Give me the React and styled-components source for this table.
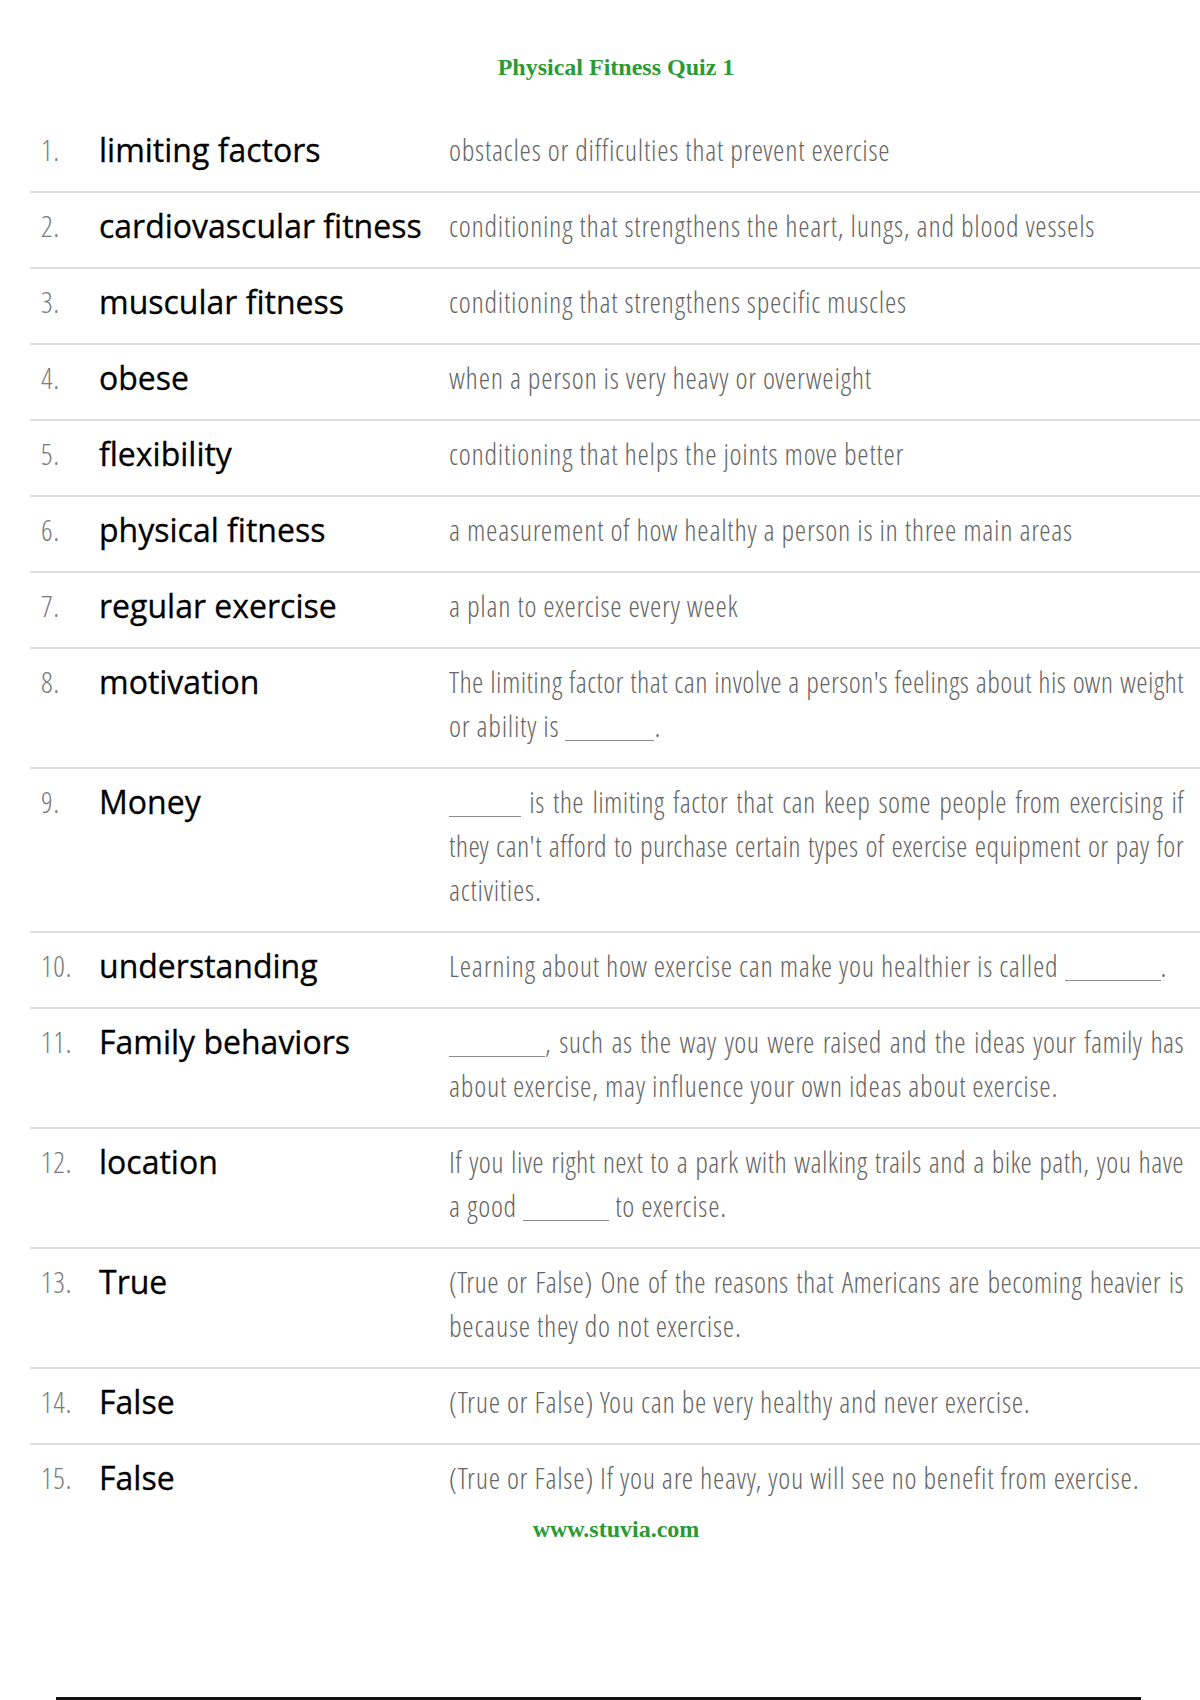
import React from "react";
import styled, { createGlobalStyle } from "styled-components";

const GlobalStyle = createGlobalStyle`
  html, body {
    margin: 0;
    padding: 0;
    background: #ffffff;
  }
`;

const Page = styled.div`
  width: 1200px;
  height: 1700px;
  overflow: hidden;
  display: flex;
  flex-direction: column;
`;

const Watermark = styled.div`
  font-family: "Liberation Serif", "Times New Roman", serif;
  font-weight: bold;
  font-size: 24px;
  line-height: 28px;
  color: #2a9a35;
  text-align: center;
  padding-left: 32px;
`;

const Title = styled(Watermark)`
  margin-top: 53px;
`;

const Footer = styled(Watermark)`
  margin-top: 15px;
`;

const Table = styled.div`
  margin: 36px 0 0 30px;
  width: 1170px;
`;

const Row = styled.div`
  display: grid;
  grid-template-columns: 58px 350px 1fr;
  padding: 11px 16px 19px 11px;
  border-bottom: 2px solid #dddddd;

  &:last-child {
    border-bottom: none;
    padding-bottom: 0;
  }
`;

const condensed = `
  font-family: "Open Sans Condensed Light", "Open Sans Condensed", "Open Sans", sans-serif;
  font-weight: 300;
  font-stretch: 75%;
  line-height: 44px;
  letter-spacing: 0.7px;
`;

const Num = styled.div`
  ${condensed}
  font-size: 29px;
  color: #7a7a7a;
`;

const Term = styled.div`
  font-family: "Open Sans", sans-serif;
  font-size: 32px;
  font-weight: 500;
  line-height: 44px;
  color: #000000;
  -webkit-text-stroke: 0.3px #000000;
  white-space: nowrap;
`;

const Def = styled.div`
  ${condensed}
  font-size: 29px;
  color: #666666;
`;

// wrapped lines are squeezed a little, then justified to the column edge
const Line = styled.div`
  white-space: nowrap;
  letter-spacing: ${(p) => (p.$fill ? "0.35px" : "0.7px")};
  text-align: ${(p) => (p.$fill ? "justify" : "left")};
  text-align-last: ${(p) => (p.$fill ? "justify" : "left")};
`;

const Blank = styled.span`
  display: inline-block;
  width: ${(p) => p.$w}px;
  height: 0;
  border-bottom: 1.5px solid #8a8a8a;
  margin-bottom: -4px;
`;

const Rule = styled.div`
  margin: auto 0 0 56px;
  width: 1085px;
  height: 3px;
  background: #111111;
`;

const items = [
  { term: "limiting factors", def: [["obstacles or difficulties that prevent exercise"]] },
  { term: "cardiovascular fitness", def: [["conditioning that strengthens the heart, lungs, and blood vessels"]] },
  { term: "muscular fitness", def: [["conditioning that strengthens specific muscles"]] },
  { term: "obese", def: [["when a person is very heavy or overweight"]] },
  { term: "flexibility", def: [["conditioning that helps the joints move better"]] },
  { term: "physical fitness", def: [["a measurement of how healthy a person is in three main areas"]] },
  { term: "regular exercise", def: [["a plan to exercise every week"]] },
  {
    term: "motivation",
    def: [
      ["The limiting factor that can involve a person's feelings about his own weight"],
      ["or ability is ", { blank: 89 }, "."],
    ],
  },
  {
    term: "Money",
    def: [
      [{ blank: 72 }, " is the limiting factor that can keep some people from exercising if"],
      ["they can't afford to purchase certain types of exercise equipment or pay for"],
      ["activities."],
    ],
  },
  { term: "understanding", def: [["Learning about how exercise can make you healthier is called ", { blank: 96 }, "."]] },
  {
    term: "Family behaviors",
    def: [
      [{ blank: 96 }, ", such as the way you were raised and the ideas your family has"],
      ["about exercise, may influence your own ideas about exercise."],
    ],
  },
  {
    term: "location",
    def: [
      ["If you live right next to a park with walking trails and a bike path, you have"],
      ["a good ", { blank: 86 }, " to exercise."],
    ],
  },
  {
    term: "True",
    def: [
      ["(True or False) One of the reasons that Americans are becoming heavier is"],
      ["because they do not exercise."],
    ],
  },
  { term: "False", def: [["(True or False) You can be very healthy and never exercise."]] },
  { term: "False", def: [["(True or False) If you are heavy, you will see no benefit from exercise."]] },
];

const App = () => {
  return (
    <Page>
      <GlobalStyle />
      <Title>Physical Fitness Quiz 1</Title>
      <Table>
        {items.map((item, i) => (
          <Row key={i}>
            <Num>{i + 1}.</Num>
            <Term>{item.term}</Term>
            <Def>
              {item.def.map((line, j) => (
                <Line key={j} $fill={j < item.def.length - 1}>
                  {line.map((seg, k) =>
                    typeof seg === "string" ? (
                      <React.Fragment key={k}>{seg}</React.Fragment>
                    ) : (
                      <Blank key={k} $w={seg.blank} />
                    )
                  )}
                </Line>
              ))}
            </Def>
          </Row>
        ))}
      </Table>
      <Footer>www.stuvia.com</Footer>
      <Rule />
    </Page>
  );
};

export default App;
